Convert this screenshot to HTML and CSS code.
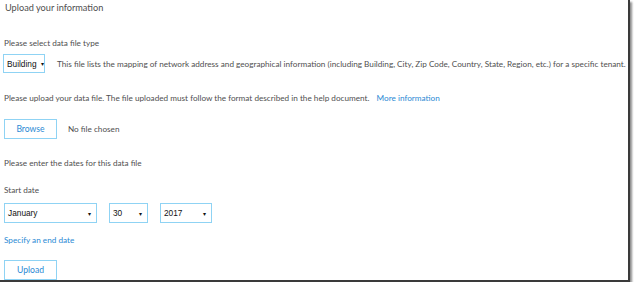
FILE: index.html
```html
<!DOCTYPE html>
<html lang="en">
<head>
    <meta charset="UTF-8">
    <title>Upload your information</title>
    <link rel="stylesheet" href="styles.css">
</head>
<body>
    <div class="frame">
        <div class="title">Upload your information</div>

        <div class="label first">Please select data file type</div>
        <div class="row type-row">
            <div class="dropdown type">Building <span class="arrow">&#9662;</span></div>
            <span class="hint">This file lists the mapping of network address and geographical information (including Building, City, Zip Code, Country, State, Region, etc.) for a specific tenant.</span>
        </div>

        <div class="label upload-label">Please upload your data file. The file uploaded must follow the format described in the help document. <a href="#" class="link more">More information</a></div>
        <div class="row file-row">
            <button class="btn">Browse</button>
            <span class="no-file">No file chosen</span>
        </div>

        <div class="label dates-label">Please enter the dates for this data file</div>
        <div class="label start-label">Start date</div>
        <div class="row date-row">
            <div class="dropdown month">January <span class="arrow">&#9662;</span></div>
            <div class="dropdown day">30 <span class="arrow">&#9662;</span></div>
            <div class="dropdown year">2017 <span class="arrow">&#9662;</span></div>
        </div>

        <a href="#" class="link end-date">Specify an end date</a>

        <div class="row submit-row">
            <button class="btn">Upload</button>
        </div>
    </div>
</body>
</html>
```

FILE: styles.css
```css
body {
    margin: 0;
    background: #ffffff;
    font-family: Lato, "Open Sans", sans-serif;
    color: #4f4f4f;
}
.frame {
    width: 624px;
    height: 280px;
    padding-left: 4px;
    overflow: hidden;
    background: #ffffff;
    border-right: 2px solid #3a3a3a;
    border-bottom: 2px solid #3a3a3a;
    box-shadow: 2px 2px 2px rgba(0, 0, 0, 0.45);
}
.title {
    height: 16px;
    line-height: 16px;
    font-size: 9.2px;
    padding-left: 1px;
}
.label {
    height: 12px;
    line-height: 12px;
    font-size: 8.2px;
    white-space: nowrap;
}
.first {
    margin-top: 21px;
}
.upload-label {
    margin-top: 19px;
}
.dates-label {
    margin-top: 18px;
}
.start-label {
    margin-top: 15px;
}
.link {
    color: #2a8ad4;
    text-decoration: none;
}
.more {
    margin-left: 5px;
}
.row {
    display: flex;
    align-items: center;
}
.type-row {
    margin-top: 5px;
    margin-left: -1px;
}
.file-row {
    margin-top: 15px;
}
.date-row {
    margin-top: 7px;
    gap: 12px;
}
.submit-row {
    margin-top: 14px;
}
.dropdown {
    box-sizing: border-box;
    height: 20px;
    display: flex;
    align-items: center;
    justify-content: space-between;
    padding: 0 5px 0 3px;
    border: 1px solid #8fd3f4;
    font-family: "Liberation Sans", Arial, sans-serif;
    font-size: 8.3px;
    color: #111111;
}
.arrow {
    font-size: 6px;
    margin-left: 4px;
}
.type {
    width: 42px;
    height: 19px;
}
.month {
    width: 93px;
}
.day {
    width: 39px;
}
.year {
    width: 52px;
}
.hint {
    margin-left: 12px;
    font-size: 8.2px;
    white-space: nowrap;
}
.btn {
    box-sizing: border-box;
    width: 53px;
    height: 20px;
    padding: 0;
    background: #ffffff;
    border: 1px solid #8fd3f4;
    color: #2a8ad4;
    font-family: Lato, "Open Sans", sans-serif;
    font-size: 8.6px;
}
.no-file {
    margin-left: 11px;
    font-size: 8.2px;
}
.end-date {
    display: block;
    margin-top: 11px;
    height: 12px;
    line-height: 12px;
    font-size: 8.2px;
}
```
